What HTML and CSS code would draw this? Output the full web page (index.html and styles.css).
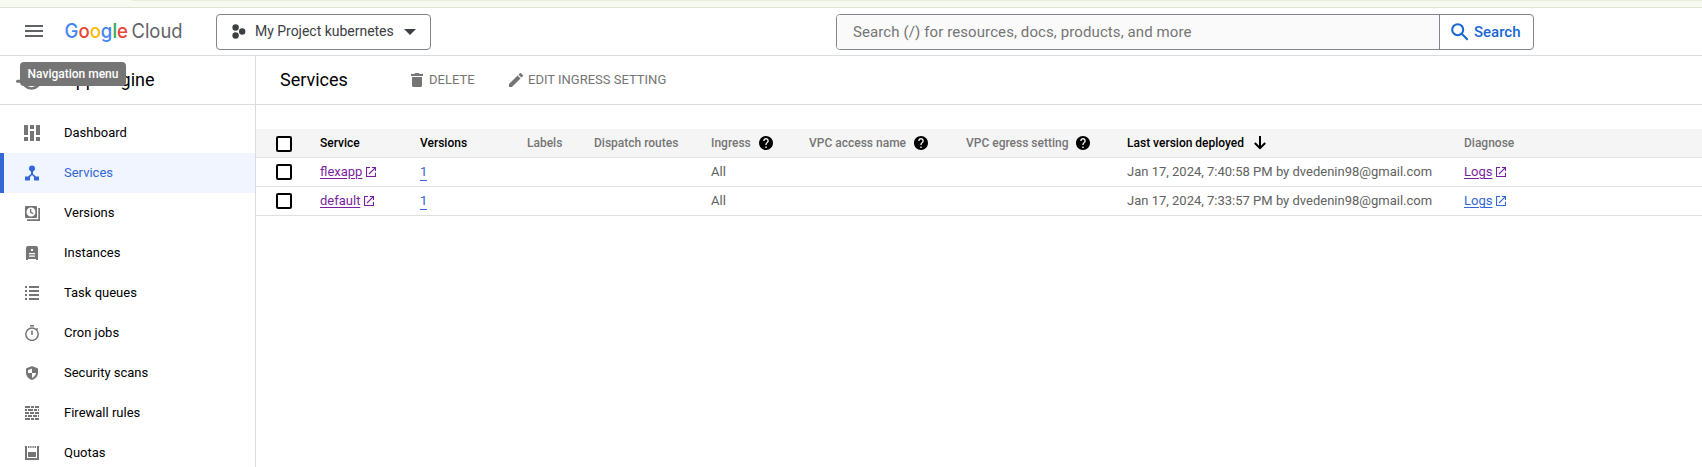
FILE: index.html
```html
<!DOCTYPE html>
<html lang="en">
<head>
<meta charset="utf-8">
<title>Services – App Engine – Google Cloud</title>
<link rel="stylesheet" href="styles.css">
</head>
<body>
<svg class="defs" width="0" height="0">
  <symbol id="open" viewBox="0 0 11 11"><path d="M4.500.6H.6v9.800h9.800v-4M6.500.6h3.900v3.900M10.300.7L3.300 7.700" fill="none" stroke="currentColor" stroke-width="1.200"/></symbol>
  <symbol id="help" viewBox="2 2 20 20"><path d="M12 2C6.480 2 2 6.480 2 12s4.480 10 10 10 10-4.480 10-10S17.520 2 12 2zm1 17h-2v-2h2v2zm2.070-7.750l-.9.920C13.450 12.900 13 13.500 13 15h-2v-.5c0-1.100.45-2.100 1.170-2.830l1.240-1.260c.37-.36.59-.86.59-1.410 0-1.100-.9-2-2-2s-2 .9-2 2H8c0-2.210 1.790-4 4-4s4 1.790 4 4c0 .88-.36 1.680-.93 2.250z"/></symbol>
</svg>
<div class="strip"></div>
<header class="topbar">
  <button class="burger" aria-label="Navigation menu"><i></i><i></i><i></i></button>
  <svg class="logo" width="120" height="28" viewBox="0 0 120 28">
    <text class="logo-google" x="-.5" y="20" textLength="63.500" lengthAdjust="spacingAndGlyphs"><tspan fill="#4285f4">G</tspan><tspan fill="#ea4335">o</tspan><tspan fill="#fbbc04">o</tspan><tspan fill="#4285f4">g</tspan><tspan fill="#34a853">l</tspan><tspan fill="#ea4335">e</tspan></text>
    <text class="logo-cloud" x="66.500" y="20" textLength="51" lengthAdjust="spacingAndGlyphs">Cloud</text>
  </svg>
  <button class="project">
    <svg width="14" height="16" viewBox="0 0 14 16" fill="#3c4043"><circle cx="3.600" cy="3.500" r="3.200"/><circle cx="3.600" cy="11.500" r="3.200"/><circle cx="10.200" cy="7.500" r="3.200"/></svg>
    <span class="project-name">My Project kubernetes</span>
    <svg width="12" height="6" viewBox="0 0 12 6" fill="#3c4043"><path d="M0 0h12L6 6z"/></svg>
  </button>
  <div class="search">
    <span class="search-input">Search (/) for resources, docs, products, and more</span>
    <span class="search-button"><svg width="18" height="18" viewBox="0 0 18 18" fill="none" stroke="#1967d2" stroke-width="2.100"><circle cx="6.700" cy="6.700" r="5.500"/><path d="M10.700 10.700l6 6"/></svg><b>Search</b></span>
  </div>
</header>
<div class="body">
  <aside class="side">
    <div class="product">
      <svg width="28" height="24" viewBox="0 0 28 24" fill="none" stroke="#757575"><circle cx="15.500" cy="12" r="8.500" stroke-width="2.600"/><circle cx="15.500" cy="12" r="3.500" fill="#757575"/><path d="M1.500 13.200h5" stroke-width="3" stroke-linecap="round"/></svg>
      <span>App Engine</span>
      <div class="tip">Navigation menu</div>
    </div>
    <nav class="nav">
      <a class="item"><svg viewBox="0 0 16 16"><path d="M0 0h4v10H0zM0 12h4v4H0zM6 0h4v4H6zM6 6h4v10H6zM12 0h4v10h-4zM12 12h4v4h-4z"/></svg>Dashboard</a>
      <a class="item on"><svg viewBox="0 0 16 16"><circle cx="8" cy="3.500" r="3"/><path d="M7 6h2v3l3 2.500h3V15.500h-5V12L8 10l-2 2v3.500H1v-4h3L7 9z"/></svg>Services</a>
      <a class="item"><svg viewBox="0 0 16 16"><path fill-rule="evenodd" d="M2 1h10a1 1 0 0 1 1 1v10a1 1 0 0 1-1 1H2a1 1 0 0 1-1-1V2a1 1 0 0 1 1-1zm5 1.500a4.500 4.500 0 1 0 0 9 4.500 4.500 0 0 0 0-9zM14.300 3H16v13H3v-1.700h11.300z"/><path d="M6.700 4v3.300l2.500 1.500" fill="none" stroke="#757575" stroke-width="1.300"/></svg>Versions</a>
      <a class="item"><svg viewBox="0 0 16 16"><path fill-rule="evenodd" d="M4 1h8a2 2 0 0 1 2 2v12h-2v-1H4v1H2V3a2 2 0 0 1 2-2zm3 3v2h2V4zM5 8v1.200h6V8zM5 10.500v1.200h6v-1.200z"/></svg>Instances</a>
      <a class="item"><svg viewBox="0 0 16 16"><path d="M1 1h2v2H1zM5 1h10v2H5zM1 5h2v2H1zM5 5h10v2H5zM1 9h2v2H1zM5 9h10v2H5zM1 13h2v2H1zM5 13h10v2H5z"/></svg>Task queues</a>
      <a class="item"><svg viewBox="0 0 16 16" fill="none" stroke="#757575"><circle cx="8" cy="9.200" r="6.200" stroke-width="1.500" fill="none"/><path d="M6 .8h4M12.500 4.500l1.200-1.200" stroke-width="1.500"/><path d="M8 5.500v4.500" stroke-width="1.500"/></svg>Cron jobs</a>
      <a class="item"><svg viewBox="0 0 16 16"><path fill-rule="evenodd" d="M8 1l6 2.500v4c0 3.500-2.500 6.500-6 7.500-3.500-1-6-4-6-7.500v-4zM8 3.500L4 5.200V8h4zM8 8v5c2-.8 3.600-2.700 4-5z"/></svg>Security scans</a>
      <a class="item"><svg viewBox="0 0 16 16"><path d="M1 1h5v2H1zM7 1h3v2H7zM11 1h4v2h-4zM1 4h2v2H1zM4 4h5v2H4zM10 4h3v2h-3zM14 4h1v2h-1zM1 7h4v2H1zM6 7h4v2H6zM11 7h4v2h-4zM1 10h2v2H1zM4 10h4v2H4zM9 10h4v2H9zM14 10h1v2h-1zM1 13h5v2H1zM7 13h3v2H7zM11 13h4v2h-4z"/></svg>Firewall rules</a>
      <a class="item"><svg viewBox="0 0 16 16"><path d="M1 1h2v12h10V1h2v14H1zM4 1h1.300v2H4zM6.200 1h1.300v2H6.200zM8.500 1h1.300v2H8.500zM10.700 1H12v2h-1.300zM4 7h8v5H4z"/></svg>Quotas</a>
    </nav>
  </aside>
  <main class="main">
    <div class="toolbar">
      <h1>Services</h1>
      <span class="action delete"><svg width="12" height="14" viewBox="0 0 12 14" fill="#757575"><path d="M0 1h3.500l.8-1h3.400l.8 1H12v2H0zM1 4h10v8.500a1.500 1.500 0 0 1-1.500 1.500h-7A1.500 1.500 0 0 1 1 12.500z"/></svg>DELETE</span>
      <span class="action edit"><svg width="14" height="14" viewBox="3 3 18 18" fill="#757575"><path d="M3 17.250V21h3.750L17.810 9.940l-3.750-3.750L3 17.250zM20.710 7.040c.39-.39.39-1.020 0-1.410l-2.340-2.340c-.39-.39-1.020-.39-1.410 0l-1.830 1.830 3.750 3.750 1.830-1.830z"/></svg>EDIT INGRESS SETTING</span>
    </div>
    <div class="table">
      <div class="row head">
        <span class="box"></span><span class="dark">Service</span><span class="dark">Versions</span><span>Labels</span><span>Dispatch routes</span>
        <span>Ingress<svg class="help"><use href="#help"/></svg></span>
        <span>VPC access name<svg class="help"><use href="#help"/></svg></span>
        <span>VPC egress setting<svg class="help"><use href="#help"/></svg></span>
        <span class="dark">Last version deployed<svg class="arrow" viewBox="0 0 12 14"><path d="M6 0v12M.8 7L6 12.200 11.200 7" fill="none" stroke="#000" stroke-width="2"/></svg></span>
        <span>Diagnose</span>
      </div>
      <div class="row">
        <span class="box"></span><span class="visited"><u>flexapp</u><svg class="open"><use href="#open"/></svg></span><span class="link"><em>1</em></span><span></span><span></span><span>All</span><span></span><span></span>
        <span class="date">Jan 17, 2024, 7:40:58 PM by dvedenin98@gmail.com</span><span class="visited"><u>Logs</u><svg class="open"><use href="#open"/></svg></span>
      </div>
      <div class="row">
        <span class="box"></span><span class="visited"><u>default</u><svg class="open"><use href="#open"/></svg></span><span class="link"><em>1</em></span><span></span><span></span><span>All</span><span></span><span></span>
        <span class="date">Jan 17, 2024, 7:33:57 PM by dvedenin98@gmail.com</span><span class="link"><u>Logs</u><svg class="open"><use href="#open"/></svg></span>
      </div>
    </div>
  </main>
</div>
</body>
</html>
```
FILE: styles.css
```css
* { box-sizing: border-box; }
body { margin: 0; height: 467px; overflow: hidden; background: #fff; font: 13px/20px Roboto, "Liberation Sans", sans-serif; color: #000; }
button { font: inherit; background: none; border: 0; padding: 0; }
svg { flex: none; display: block; }
.defs { position: absolute; }
.strip { height: 8px; background: linear-gradient(to right, #f7faf0 132px, #e4eedb 132px) 0 0 / 100% 1px no-repeat #f7faf0; border-bottom: 1px solid #dee3d6; }
.topbar { height: 48px; border-bottom: 1px solid #dadce0; display: flex; align-items: flex-start; padding: 6px 0 0 25px; }
.burger { width: 18px; margin-top: 11px; display: grid; gap: 3px; }
.burger i { height: 2px; background: #5f6368; }
.logo { margin: 4px 0 0 22px; overflow: visible; }
.logo-google { font: 500 20px Inter, sans-serif; }
.logo-cloud { font: 400 20px Inter, sans-serif; fill: #5f6368; }
.project { width: 215px; height: 36px; margin-left: 31px; border: 1px solid #80868b; border-radius: 4px; display: flex; align-items: center; padding: 0 14px 0 15px; color: #3c4043; font-size: 14px; }
.project-name { margin: 0 auto 0 9px; padding-bottom: 2px; letter-spacing: -.02px; }
.search { width: 698px; height: 36px; margin-left: 405px; border: 1px solid #80868b; border-radius: 4px; display: flex; overflow: hidden; }
.search-input { width: 603px; padding: 7px 0 0 16px; background: #fafafa; color: #757575; font-size: 15px; letter-spacing: .1px; border-right: 1px solid #80868b; }
.search-button { display: flex; padding: 8px 0 0 11px; gap: 5px; color: #1967d2; font-size: 15px; }
.search-button b { font-weight: 500; margin-top: -1px; }
.body { display: flex; height: 411px; }
.side { width: 256px; border-right: 1px solid #dadce0; flex: none; }
.product { position: relative; height: 49px; border-bottom: 1px solid #dadce0; display: flex; align-items: center; padding-left: 16px; gap: 20px; font-size: 18px; }
.tip { position: absolute; left: 20px; top: 6px; width: 106px; height: 24px; border-radius: 4px; background: #757575; color: #fff; font: 500 12px/24px Roboto, sans-serif; text-align: center; }
.nav { padding-top: 8px; }
.item { height: 40px; display: flex; align-items: center; gap: 24px; padding-left: 24px; font-size: 13px; }
.item svg { width: 16px; height: 16px; fill: #757575; }
.on { background: #f0f5ff; border-left: 4px solid #3367d6; padding-left: 20px; color: #3367d6; }
.on svg { fill: #3367d6; }
.main { flex: 1; min-width: 0; }
.toolbar { height: 49px; border-bottom: 1px solid #dadce0; display: flex; align-items: center; padding-left: 24px; }
h1 { margin: 0; width: 131px; font-size: 18px; font-weight: 400; }
.action { display: flex; align-items: center; gap: 6px; color: #757575; }
.delete { width: 98px; }
.edit { gap: 5px; }
.table { margin-top: 24px; }
.row { height: 29px; border-bottom: 1px solid #e0e0e0; display: grid; grid-template-columns: 44px 100px 107px 67px 117px 98px 157px 161px 337px 1fr; padding-left: 20px; color: #616161; white-space: nowrap; }
.row > span { display: flex; align-items: center; }
.head { background: #f5f5f5; font-size: 12px; font-weight: 500; color: #757575; }
.head .dark { color: #000; }
.row > .box { width: 16px; height: 16px; margin-top: 6px; border: 2px solid #000; border-radius: 2px; background: #fff; }
.head > .box { margin-top: 7px; }
.help { width: 14px; height: 14px; margin-left: 8px; fill: #000; }
.arrow { width: 12px; height: 14px; margin-left: 10px; }
.open { width: 10px; height: 10px; margin-left: 4px; }
.row .visited { color: #7b1fa2; }
.row .link { color: #3367d6; }
u { text-underline-offset: 2px; }
em { font-style: normal; line-height: 17px; border-bottom: 1px solid #3367d6; }
```
